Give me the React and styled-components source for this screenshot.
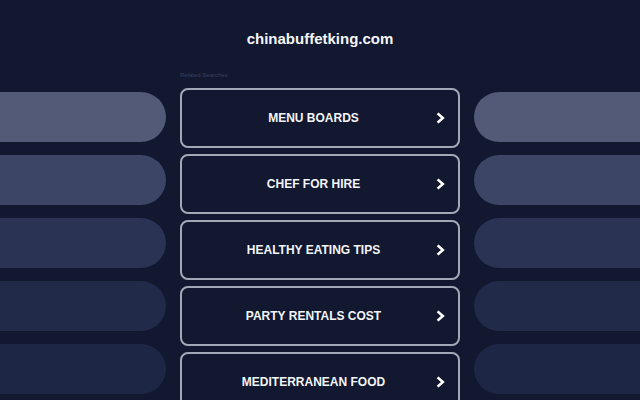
import React from "react";
import styled, { createGlobalStyle } from "styled-components";

const GlobalStyle = createGlobalStyle`
  html, body {
    margin: 0;
    padding: 0;
    background-color: #111830;
    font-family: "Liberation Sans", Arial, sans-serif;
  }
`;

const Page = styled.div`
  width: 640px;
  height: 400px;
  overflow: hidden;
  display: flex;
  flex-direction: column;
`;

const Title = styled.h1`
  margin: 0;
  padding-top: 30px;
  height: 18px;
  font-size: 15px;
  line-height: 18px;
  font-weight: 700;
  color: #f4f5f8;
  text-align: center;
`;

const Body = styled.div`
  display: flex;
  gap: 14px;
`;

const Side = styled.div`
  width: 166px;
  padding-top: 44px;
  display: flex;
  flex-direction: column;
  gap: 13px;
`;

const Pill = styled.div`
  height: 50px;
  flex-shrink: 0;
  background-color: ${(props) => props.color};
  border-radius: ${(props) => (props.side === "left" ? "0 25px 25px 0" : "25px 0 0 25px")};
`;

const Center = styled.div`
  width: 280px;
  padding-top: 23px;
  display: flex;
  flex-direction: column;
`;

const Label = styled.div`
  font-size: 6px;
  line-height: 8px;
  color: #3a415c;
  margin-bottom: 9px;
`;

const List = styled.div`
  display: flex;
  flex-direction: column;
  gap: 6px;
`;

const Button = styled.a`
  position: relative;
  box-sizing: border-box;
  height: 60px;
  flex-shrink: 0;
  border: 2px solid #a3a8b7;
  border-radius: 8px;
  background-color: #111830;
  display: flex;
  align-items: center;
  justify-content: center;
  padding: 0 34px 0 21px;
  color: #f4f5f8;
  font-size: 12px;
  font-weight: 700;
  text-decoration: none;
  cursor: pointer;
`;

const Arrow = styled.svg`
  position: absolute;
  right: 13px;
  top: 50%;
  margin-top: -6px;
  width: 9px;
  height: 12px;
`;

const colors = ["#525a78", "#3d4566", "#2b3354", "#222a4a", "#1e2646"];
const links = [
  "MENU BOARDS",
  "CHEF FOR HIRE",
  "HEALTHY EATING TIPS",
  "PARTY RENTALS COST",
  "MEDITERRANEAN FOOD",
];

const Chevron = () => (
  <Arrow viewBox="0 0 9 12">
    <polyline
      points="1.6,1.4 6.8,6 1.6,10.6"
      fill="none"
      stroke="#ffffff"
      strokeWidth="2.6"
    />
  </Arrow>
);

const App = () => {
  return (
    <Page>
      <GlobalStyle />
      <Title>chinabuffetking.com</Title>
      <Body>
        <Side>
          {colors.map((c) => (
            <Pill key={c} color={c} side="left" />
          ))}
        </Side>
        <Center>
          <Label>Related Searches</Label>
          <List>
            {links.map((text) => (
              <Button key={text}>
                {text}
                <Chevron />
              </Button>
            ))}
          </List>
        </Center>
        <Side>
          {colors.map((c) => (
            <Pill key={c} color={c} side="right" />
          ))}
        </Side>
      </Body>
    </Page>
  );
};

export default App;
